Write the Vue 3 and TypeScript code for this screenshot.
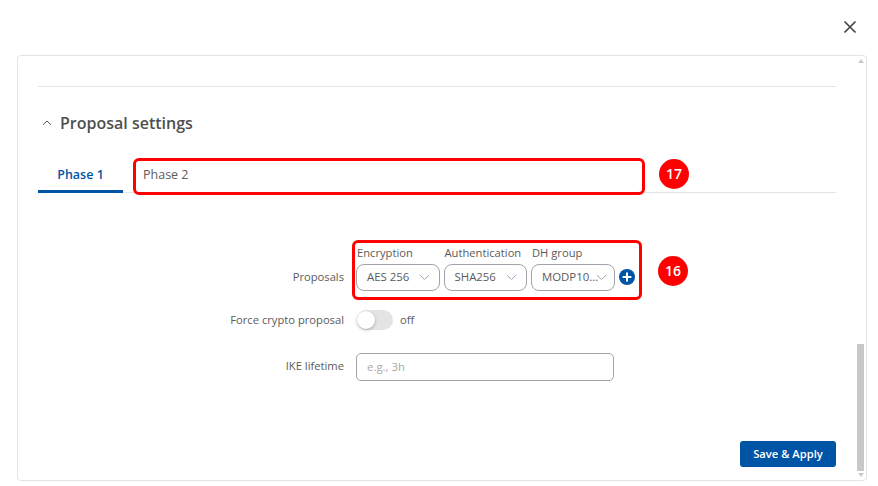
<script setup lang="ts">
const selects = [
  { label: 'Encryption', value: 'AES 256' },
  { label: 'Authentication', value: 'SHA256' },
  { label: 'DH group', value: 'MODP10...' },
]
</script>

<template>
  <div class="page">
    <header class="top">
      <svg class="close" width="14" height="14" viewBox="0 0 14 14"><path d="M1.5 1.5 12.5 12.5M12.5 1.5 1.5 12.5" stroke="#444" stroke-width="1.7" fill="none"/></svg>
    </header>
    <section class="panel">
      <div class="content">
        <div class="rule"></div>
        <div class="heading">
          <svg width="12" height="8" viewBox="0 0 12 8"><path d="M2 5.8 6 2 10 5.8" stroke="#555" stroke-width="1" fill="none"/></svg>
          <h2>Proposal settings</h2>
        </div>
        <div class="tabs">
          <div class="tab active">Phase 1</div>
          <div class="tab">Phase 2
            <span class="mark mark-tab"></span>
            <span class="badge badge-tab">17</span>
          </div>
        </div>
        <form class="form" @submit.prevent>
          <div class="row row-proposals">
            <span class="label">Proposals</span>
            <div class="proposals">
              <span class="mark mark-prop"></span>
              <span class="badge badge-prop">16</span>
              <div v-for="s in selects" :key="s.label" class="col">
                <span class="col-label">{{ s.label }}</span>
                <div class="select">
                  <span>{{ s.value }}</span>
                  <svg width="11" height="7" viewBox="0 0 11 7"><path d="M.8 1 5.5 5.6 10.2 1" stroke="#a3a3ad" stroke-width="1" fill="none"/></svg>
                </div>
              </div>
              <svg class="plus" width="16" height="16" viewBox="0 0 16 16"><circle cx="8" cy="8" r="8" fill="#0054a6"/><path d="M8 3.6v8.8M3.6 8h8.8" stroke="#fff" stroke-width="2"/></svg>
            </div>
          </div>
          <div class="row row-toggle">
            <span class="label">Force crypto proposal</span>
            <div class="toggle-wrap">
              <span class="toggle"><span class="knob"></span></span>
              <span class="off">off</span>
            </div>
          </div>
          <div class="row row-life">
            <span class="label">IKE lifetime</span>
            <div class="input">e.g., 3h</div>
          </div>
        </form>
        <div class="actions"><button type="button" class="save">Save &amp; Apply</button></div>
      </div>
      <div class="scrollbar">
        <span class="arrow up"></span>
        <span class="track"><span class="thumb"></span></span>
        <span class="arrow down"></span>
      </div>
    </section>
  </div>
</template>

<style>
html, body { margin: 0; background: #fff; }
</style>

<style scoped>
.page {
  width: 878px;
  height: 486px;
  box-sizing: border-box;
  padding: 0 11px 5px 17px;
  display: flex;
  flex-direction: column;
  font-family: "Open Sans", sans-serif;
  font-size: 11.2px;
  color: #5b5b5b;
  overflow: hidden;
}
.top {
  height: 55px;
  flex: none;
  display: flex;
  justify-content: flex-end;
  align-items: flex-start;
  padding: 20px 10px 0 0;
  box-sizing: border-box;
}
.panel {
  flex: 1;
  display: flex;
  border: 1px solid #e4e4e4;
  border-radius: 4px;
  min-height: 0;
}
.content {
  flex: 1;
  padding: 30px 21px 13px 20px;
  display: flex;
  flex-direction: column;
  min-width: 0;
}
.rule { height: 1px; background: #e4e4e4; }
.heading {
  display: flex;
  align-items: center;
  gap: 7px;
  height: 22px;
  margin-top: 25px;
  padding-left: 3px;
}
.heading h2 {
  margin: 0;
  font-size: 16px;
  font-weight: 600;
  color: #4f4f4f;
  line-height: 22px;
}
.tabs {
  display: flex;
  gap: 0;
  height: 38px;
  margin-top: 21px;
  box-sizing: border-box;
  border-bottom: 1px solid #e4e4e4;
}
.tab {
  position: relative;
  width: 85px;
  height: 38px;
  box-sizing: border-box;
  text-align: center;
  line-height: 39px;
  font-size: 12.5px;
  color: #5b5b5b;
}
.tab + .tab { text-align: left; padding-left: 20px; }
.tab.active {
  color: #0054a6;
  font-weight: 600;
  border-bottom: 3px solid #0054a6;
}
.mark {
  position: absolute;
  border: 3px solid #f00;
  border-radius: 6px;
  box-sizing: border-box;
  pointer-events: none;
}
.mark-tab { left: 10px; top: 3px; width: 512px; height: 37px; }
.mark-prop { left: -4px; top: -5px; width: 290px; height: 60px; }
.badge {
  position: absolute;
  width: 30px;
  height: 30px;
  border-radius: 50%;
  background: #f00;
  color: #fff;
  font-weight: 600;
  font-size: 14px;
  line-height: 30px;
  text-align: center;
  font-family: "Open Sans", sans-serif;
}
.badge-tab { left: 536px; top: 4px; }
.badge-prop { left: 302px; top: 11px; }
.form { margin-top: 52px; display: flex; flex-direction: column; }
.row { display: grid; grid-template-columns: 306px 1fr; column-gap: 12px; }
.label { text-align: right; font-size: 11.2px; color: #5b5b5b; }
.row-proposals .label { align-self: end; line-height: 27px; padding-bottom: 1px; }
.proposals {
  position: relative;
  display: flex;
  align-items: flex-end;
  gap: 4px;
}
.col { display: flex; flex-direction: column; width: 83.5px; flex: none; }
.col-label { font-size: 11.2px; line-height: 16px; height: 16px; padding-left: 1px; white-space: nowrap; color: #5b5b5b; margin-bottom: 3px; }
.select {
  height: 27px;
  box-sizing: border-box;
  border: 1px solid #a3a3ad;
  border-radius: 8px;
  display: flex;
  align-items: center;
  justify-content: space-between;
  padding: 0 9px 0 10px;
  font-size: 11.4px;
  color: #5b5b5b;
}
.select span { white-space: nowrap; padding-bottom: 2px; }
.select svg { flex: none; margin-left: -2px; }
.plus { margin: 0 0 6px 0.5px; flex: none; }
.row-toggle { margin-top: 18px; height: 22px; align-items: center; }
.row-toggle .label { padding-bottom: 2px; }
.toggle-wrap { display: flex; align-items: center; gap: 7px; padding-left: 1px; }
.toggle {
  position: relative;
  width: 36px;
  height: 20px;
  background: #e4e4e4;
  border-radius: 10px;
  display: block;
}
.knob {
  position: absolute;
  left: 0;
  top: 1px;
  width: 18px;
  height: 18px;
  border-radius: 50%;
  background: #fff;
  box-shadow: 0 1px 3px rgba(0,0,0,.3);
}
.off { font-size: 11.2px; padding-bottom: 2px; }
.row-life { margin-top: 22px; }
.row-life .label { line-height: 26px; }
.input {
  width: 258px;
  height: 28px;
  box-sizing: border-box;
  border: 1px solid #a3a3ad;
  border-radius: 5px;
  padding-left: 10px;
  line-height: 25px;
  font-size: 11.4px;
  color: #a9a9a9;
}
.actions { margin-top: auto; display: flex; justify-content: flex-end; }
.save {
  width: 96px;
  height: 26px;
  border: 0;
  padding: 0 0 2px;
  border-radius: 3px;
  background: #0054a6;
  color: #fff;
  font: 600 11.2px "Open Sans", sans-serif;
}
.scrollbar {
  flex: none;
  width: 7px;
  margin-right: 2px;
  padding: 3px 0;
  display: flex;
  flex-direction: column;
  align-items: center;
}
.arrow { flex: none; width: 0; height: 0; border-left: 3px solid transparent; border-right: 3px solid transparent; }
.up { border-bottom: 4px solid #c8c8c8; }
.down { border-top: 4px solid #c8c8c8; }
.track { flex: 1; width: 100%; display: flex; align-items: flex-end; padding: 2px 0; }
.thumb { display: block; width: 100%; height: 127px; background: #c8c8c8; }
</style>
